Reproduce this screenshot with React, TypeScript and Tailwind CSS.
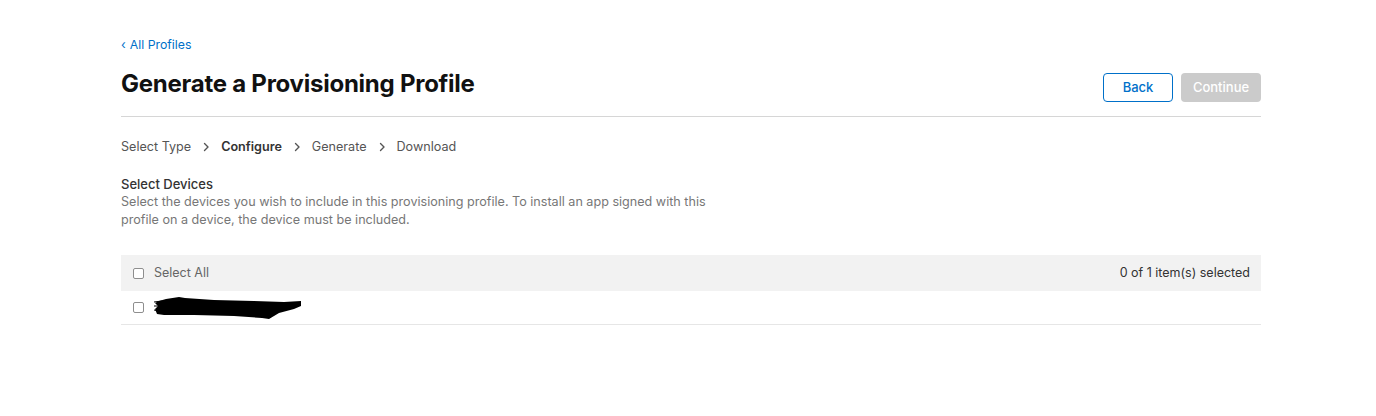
import React from "react";

function Chevron() {
  return (
    <svg width="8" height="10" viewBox="0 0 8 10" className="mx-[11px]">
      <path d="M2.5 1.5 L6 5 L2.5 8.5" fill="none" stroke="#555" strokeWidth="1.4" strokeLinecap="round" strokeLinejoin="round" />
    </svg>
  );
}

function Box() {
  return <span className="inline-block w-[11px] h-[11px] rounded-[2px] border border-[#8e8e8e] bg-white" />;
}

export default function App() {
  return (
    <div className="w-[1376px] h-[416px] bg-white" style={{ fontFamily: "Inter, 'Noto Sans', sans-serif" }}>
      <div className="ml-[121px] w-[1140px] pt-[37px]">
        <a className="text-[12.3px] text-[#0070c9] leading-[16px] flex items-center gap-[4px]">
          <span>‹</span>
          <span>All Profiles</span>
        </a>
        <div className="flex items-start justify-between mt-[16px] pb-[14px] border-b border-[#d6d6d6]">
          <h1 className="text-[24px] font-bold text-[#111] leading-[30px] tracking-[-0.25px]">Generate a Provisioning Profile</h1>
          <div className="flex gap-[8px] mt-[4px]">
            <button className="w-[70px] h-[29px] rounded-[4px] border border-[#0070c9] text-[#0070c9] text-[13px] font-medium bg-white">Back</button>
            <button className="w-[80px] h-[29px] rounded-[4px] bg-[#cbcbcb] text-white text-[13px] font-medium">Continue</button>
          </div>
        </div>
        <div className="flex items-center mt-[21px] text-[12.6px] leading-[18px] text-[#555]">
          <span>Select Type</span>
          <Chevron />
          <span className="font-semibold text-[#333]">Configure</span>
          <Chevron />
          <span>Generate</span>
          <Chevron />
          <span>Download</span>
        </div>
        <div className="mt-[19px] text-[13px] leading-[18px] text-[#333] font-medium">Select Devices</div>
        <p className="text-[12.6px] leading-[18px] text-[#777] w-[600px]">
          Select the devices you wish to include in this provisioning profile. To install an app signed with this profile on a device, the device must be included.
        </p>
        <div className="mt-[26px]">
          <div className="h-[36px] bg-[#f2f2f2] flex items-center justify-between px-[12px] text-[12.5px] text-[#666]">
            <div className="flex items-center gap-[10px]">
              <Box />
              <span>Select All</span>
            </div>
            <span className="text-[#333] mr-[-1px]">0 of 1 item(s) selected</span>
          </div>
          <div className="h-[34px] border-b border-[#e6e6e6] flex items-center px-[12px] gap-[10px]">
            <Box />
            <svg width="148" height="23" viewBox="0 0 148 23" className="mt-[2px]">
              <path d="M5 4 L12 2 L25 0 L31 1 L60 3 L100 4 L130 5 L147 4 L147 9 L140 12 L125 16 L115 22 L108 21 L80 19 L40 18 L10 18 L3 17 L1 12 L4 9 L1 6 Z" fill="#000" />
              <path d="M0 5 L8 4 M0 9 L6 9 M0 13 L5 14" stroke="#000" strokeWidth="1.2" />
            </svg>
          </div>
        </div>
      </div>
    </div>
  );
}
